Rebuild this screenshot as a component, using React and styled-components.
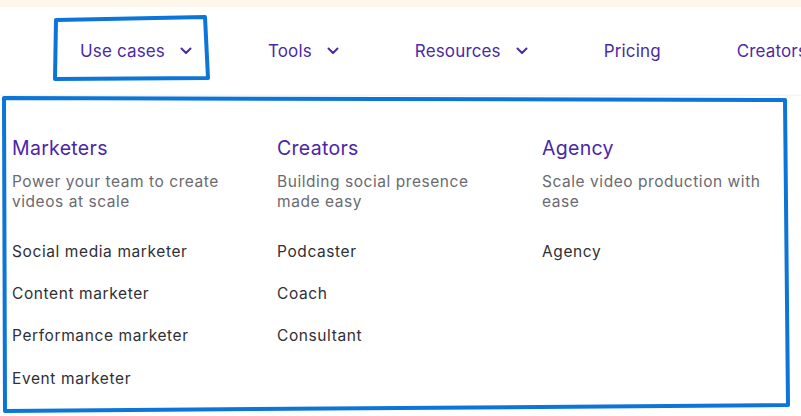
import React from "react";
import styled, { createGlobalStyle } from "styled-components";

const GlobalStyle = createGlobalStyle`
  html, body {
    margin: 0;
    padding: 0;
    background: #ffffff;
    font-family: "Inter", "Liberation Sans", sans-serif;
  }
`;

const Page = styled.div`
  position: relative;
  width: 801px;
  height: 416px;
  overflow: hidden;
  background: #fff;
`;

const TopStrip = styled.div`
  height: 7px;
  background: #fdf6ea;
`;

const NavBar = styled.nav`
  height: 89px;
  display: flex;
  align-items: center;
  padding-left: 80px;
  padding-bottom: 2px;
  box-sizing: border-box;
  gap: 76px;
  white-space: nowrap;
`;

const NavItem = styled.div`
  display: flex;
  align-items: center;
  gap: 15px;
  font-size: 17px;
  letter-spacing: 0.15px;
  color: #4b2aa6;
  flex-shrink: 0;
`;

const Panel = styled.div`
  display: grid;
  grid-template-columns: 265px 265px 265px;
  padding: 40px 0 0 12px;
  box-shadow: 0 -1px 2px rgba(0, 0, 0, 0.06);
  height: 320px;
  box-sizing: border-box;
`;

const Column = styled.div`
  display: flex;
  flex-direction: column;
`;

const Heading = styled.div`
  font-size: 19.5px;
  letter-spacing: 0.3px;
  color: #4a25ab;
  line-height: 24px;
`;

const Desc = styled.div`
  font-size: 15.5px;
  letter-spacing: 0.55px;
  line-height: 20px;
  color: #6a6a70;
  margin-top: 12px;
  width: 228px;
  height: 40px;
`;

const LinkList = styled.div`
  display: flex;
  flex-direction: column;
  margin-top: 19px;
`;

const Link = styled.a`
  font-size: 15.5px;
  letter-spacing: 0.6px;
  line-height: 20px;
  color: #2f2f35;
  padding: 11.1px 0;
  text-decoration: none;
`;

const Overlay = styled.svg`
  position: absolute;
  inset: 0;
  pointer-events: none;
`;

const Chevron = () => (
  <svg width="12" height="8" viewBox="0 0 12 8">
    <path d="M1.5 1.5 L6 6 L10.5 1.5" fill="none" stroke="#4b2aa6" strokeWidth="2" strokeLinecap="round" strokeLinejoin="round" />
  </svg>
);

const nav = [
  { label: "Use cases", menu: true },
  { label: "Tools", menu: true },
  { label: "Resources", menu: true },
  { label: "Pricing" },
  { label: "Creators" },
];

const columns = [
  {
    title: "Marketers",
    desc: "Power your team to create videos at scale",
    links: ["Social media marketer", "Content marketer", "Performance marketer", "Event marketer"],
  },
  {
    title: "Creators",
    desc: "Building social presence made easy",
    links: ["Podcaster", "Coach", "Consultant"],
  },
  {
    title: "Agency",
    desc: "Scale video production with ease",
    links: ["Agency"],
  },
];

export default function App() {
  return (
    <Page>
      <GlobalStyle />
      <TopStrip />
      <NavBar>
        {nav.map((n) => (
          <NavItem key={n.label}>
            {n.label}
            {n.menu && <Chevron />}
          </NavItem>
        ))}
      </NavBar>
      <Panel>
        {columns.map((c) => (
          <Column key={c.title}>
            <Heading>{c.title}</Heading>
            <Desc>{c.desc}</Desc>
            <LinkList>
              {c.links.map((l) => (
                <Link key={l} href="#">{l}</Link>
              ))}
            </LinkList>
          </Column>
        ))}
      </Panel>
      {/* hand-drawn annotation marks */}
      <Overlay width="801" height="416" viewBox="0 0 801 416">
        <path d="M56 20 L205 17 L208 78 L55 79 Z" fill="none" stroke="#0b76d8" strokeWidth="4" strokeLinejoin="round" />
        <path d="M4 98 L785 100 L788 405 L5 411 Z" fill="none" stroke="#0b76d8" strokeWidth="4" strokeLinejoin="round" />
      </Overlay>
    </Page>
  );
}
